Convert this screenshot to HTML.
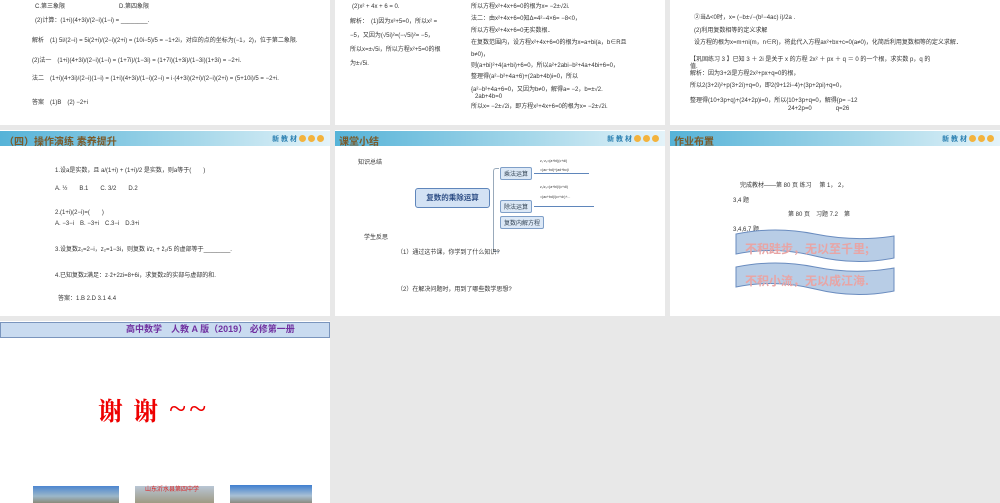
<!DOCTYPE html>
<html><head><meta charset="utf-8"><style>
*{margin:0;padding:0;box-sizing:border-box}
body{width:1000px;height:503px;background:#e8e8e8;position:relative;overflow:hidden;font-family:"Liberation Sans","Noto Sans CJK SC",sans-serif;color:#333}
.p{position:absolute;background:#fff;overflow:hidden}
.t{position:absolute;font-size:6px;white-space:nowrap;line-height:1}
.hd{position:absolute;left:0;top:1px;width:100%;height:15px;background:linear-gradient(90deg,#56b3d8 0%,#a7d8ea 60%,#e4f3f9 100%)}
.hd b{position:absolute;left:4px;top:2px;font-size:10px;color:#7a5a2a;font-weight:bold}
.nj{position:absolute;right:6px;top:3px;font-size:7px;color:#2a7fb0;font-weight:bold}
.dot{display:inline-block;width:7px;height:7px;border-radius:50%;background:#f3b33d;margin-left:2px;vertical-align:-1px}
.bx{position:absolute;border:1px solid #7f9fc8;background:#dce8f6;font-size:6px;color:#345;padding:1px 3px;border-radius:2px}
</style></head><body>
<!-- row1 -->
<div class="p" style="left:0;top:0;width:330px;height:125px">
<div class="t" style="left:35px;top:4px">C.第三象限　　　　　　　　　D.第四象限</div>
<div class="t" style="left:35px;top:18px">(2)计算：(1+i)(4+3i)/(2−i)(1−i) = ________.</div>
<div class="t" style="left:32px;top:38px">解析　(1) 5i/(2−i) = 5i(2+i)/(2−i)(2+i) = (10i−5)/5 = −1+2i，对应的点的坐标为(−1，2)，位于第二象限.</div>
<div class="t" style="left:32px;top:58px">(2)法一　(1+i)(4+3i)/(2−i)(1−i) = (1+7i)/(1−3i) = (1+7i)(1+3i)/(1−3i)(1+3i) = −2+i.</div>
<div class="t" style="left:32px;top:76px">法二　(1+i)(4+3i)/(2−i)(1−i) = (1+i)(4+3i)/(1−i)(2−i) = i·(4+3i)(2+i)/(2−i)(2+i) = (5+10i)/5 = −2+i.</div>
<div class="t" style="left:32px;top:100px">答案　(1)B　(2) −2+i</div>
</div>
<div class="p" style="left:335px;top:0;width:330px;height:125px">
<div class="t" style="left:17px;top:4px">(2)x² + 4x + 6 = 0.</div>
<div class="t" style="left:15px;top:19px">解析：　(1)因为x²+5=0，所以x² =</div>
<div class="t" style="left:15px;top:33px">−5，又因为(√5i)²=(−√5i)²= −5，</div>
<div class="t" style="left:15px;top:47px">所以x=±√5i，所以方程x²+5=0的根</div>
<div class="t" style="left:15px;top:61px">为±√5i.</div>
<div class="t" style="left:136px;top:4px">所以方程x²+4x+6=0的根为x= −2±√2i.</div>
<div class="t" style="left:136px;top:16px">法二：由x²+4x+6=0知Δ=4²−4×6= −8&lt;0，</div>
<div class="t" style="left:136px;top:28px">所以方程x²+4x+6=0无实数根．</div>
<div class="t" style="left:136px;top:40px">在复数范围内，设方程x²+4x+6=0的根为x=a+bi(a，b∈R且</div>
<div class="t" style="left:136px;top:52px">b≠0)，</div>
<div class="t" style="left:136px;top:63px">则(a+bi)²+4(a+bi)+6=0，所以a²+2abi−b²+4a+4bi+6=0，</div>
<div class="t" style="left:136px;top:74px">整理得(a²−b²+4a+6)+(2ab+4b)i=0，所以</div>
<div class="t" style="left:136px;top:87px">{a²−b²+4a+6=0，又因为b≠0，解得a= −2，b=±√2.</div>
<div class="t" style="left:140px;top:94px">2ab+4b=0</div>
<div class="t" style="left:136px;top:104px">所以x= −2±√2i，即方程x²+4x+6=0的根为x= −2±√2i.</div>
</div>
<div class="p" style="left:670px;top:0;width:330px;height:125px">
<div class="t" style="left:24px;top:15px">②当Δ&lt;0时，x= (−b±√−(b²−4ac) i)/2a .</div>
<div class="t" style="left:24px;top:28px">(2)利用复数相等的定义求解</div>
<div class="t" style="left:24px;top:40px">设方程的根为x=m+ni(m，n∈R)，将此代入方程ax²+bx+c=0(a≠0)，化简后利用复数相等的定义求解．</div>
<div class="t" style="left:20px;top:57px">【巩固练习 3 】已知 3 ＋ 2i 是关于 x 的方程 2x² ＋ px ＋ q ＝ 0 的一个根，求实数 p，q 的</div>
<div class="t" style="left:20px;top:64px">值.</div>
<div class="t" style="left:20px;top:71px">解析：因为3+2i是方程2x²+px+q=0的根，</div>
<div class="t" style="left:20px;top:83px">所以2(3+2i)²+p(3+2i)+q=0，即2(9+12i−4)+(3p+2pi)+q=0，</div>
<div class="t" style="left:20px;top:98px">整理得(10+3p+q)+(24+2p)i=0，所以{10+3p+q=0，解得{p= −12</div>
<div class="t" style="left:118px;top:106px">24+2p=0　　　　q=26</div>
</div>
<!-- row2 -->
<div class="p" style="left:0;top:130px;width:330px;height:186px">
<div class="hd"><b>（四）操作演练  素养提升</b><span class="nj">新 教 材<span class="dot"></span><span class="dot"></span><span class="dot"></span></span></div>
<div class="t" style="left:55px;top:38px">1.设a是实数，且 a/(1+i) + (1+i)/2 是实数，则a等于(　　)</div>
<div class="t" style="left:55px;top:56px">A. ½　　B.1　　C. 3/2　　D.2</div>
<div class="t" style="left:55px;top:80px">2.(1+i)(2−i)=(　　)</div>
<div class="t" style="left:55px;top:91px">A. −3−i　B. −3+i　C.3−i　D.3+i</div>
<div class="t" style="left:55px;top:117px">3.设复数z₁=2−i，z₂=1−3i，则复数 i/z₁ + z̄₂/5 的虚部等于________.</div>
<div class="t" style="left:55px;top:143px">4.已知复数z满足：z·z̄+2zi=8+6i，求复数z的实部与虚部的和.</div>
<div class="t" style="left:58px;top:166px">答案：1.B  2.D  3.1  4.4</div>
</div>
<div class="p" style="left:335px;top:130px;width:330px;height:186px">
<div class="hd"><b>课堂小结</b><span class="nj">新 教 材<span class="dot"></span><span class="dot"></span><span class="dot"></span></span></div>
<div class="t" style="left:23px;top:30px">知识总结</div>
<div style="position:absolute;left:80px;top:58px;width:75px;height:20px;border:1px solid #5f86bb;background:#d3e2f4;border-radius:3px;font-size:7.5px;color:#2f4f86;text-align:center;line-height:18px;font-weight:bold">复数的乘除运算</div>
<div style="position:absolute;left:158px;top:38px;width:6px;height:84px;border:1px solid #9ab;border-right:none;border-radius:3px 0 0 3px"></div>
<div class="bx" style="left:165px;top:37px">乘法运算</div>
<div class="bx" style="left:165px;top:70px">除法运算</div>
<div class="bx" style="left:165px;top:86px">复数内解方程</div>
<div style="position:absolute;left:199px;top:43px;width:55px;border-top:1px solid #5f86bb"></div>
<div style="position:absolute;left:199px;top:76px;width:60px;border-top:1px solid #5f86bb"></div>
<div class="t" style="left:205px;top:30px;font-size:3.5px">z₁·z₂=(a+bi)(c+di)</div>
<div class="t" style="left:205px;top:39px;font-size:3.5px">=(ac−bd)+(ad+bc)i</div>
<div class="t" style="left:205px;top:56px;font-size:3.5px">z₁/z₂=(a+bi)/(c+di)</div>
<div class="t" style="left:205px;top:66px;font-size:3.5px">=(ac+bd)/(c²+d²)+...</div>
<div class="t" style="left:29px;top:105px">学生反思</div>
<div class="t" style="left:62px;top:120px">（1）通过这节课，你学到了什么知识?</div>
<div class="t" style="left:62px;top:157px">（2）在解决问题时，用到了哪些数学思想?</div>
</div>
<div class="p" style="left:670px;top:130px;width:330px;height:186px">
<div class="hd"><b>作业布置</b><span class="nj">新 教 材<span class="dot"></span><span class="dot"></span><span class="dot"></span></span></div>
<div class="t" style="left:70px;top:53px">完成教材——第 80 页  练习　 第 1， 2，</div>
<div class="t" style="left:63px;top:68px">3,4 题</div>
<div class="t" style="left:118px;top:82px">第 80 页　习题 7.2　第</div>
<div class="t" style="left:63px;top:97px">3,4,6,7 题</div>
<svg style="position:absolute;left:65px;top:98px" width="160" height="97">
<path d="M1 6 Q40 -2 80 6 T159 8 V30 Q120 38 80 28 T1 26 Z" fill="#b8cde6" stroke="#6a8cbf"/>
<path d="M1 39 Q40 31 80 39 T159 40 V63 Q120 71 80 61 T1 59 Z" fill="#b8cde6" stroke="#6a8cbf"/>
<text x="10" y="25" font-size="12" fill="#e8a5a5" font-weight="bold" font-family="Noto Sans CJK SC">不积跬步，无以至千里;</text>
<text x="10" y="57" font-size="12" fill="#e8a5a5" font-weight="bold" font-family="Noto Sans CJK SC">不积小流，无以成江海.</text>
</svg>
</div>
<!-- row3 -->
<div class="p" style="left:0;top:321px;width:330px;height:182px">
<div style="position:absolute;left:0;top:1px;width:330px;height:16px;background:#c9dbf0;border:1px solid #7a95bd"></div>
<div class="t" style="left:126px;top:4px;font-size:9px;color:#7030a0;font-weight:bold">高中数学　人教 A 版（2019）  必修第一册</div>
<div class="t" style="left:98px;top:71px;font-size:25px;color:#e00;font-weight:bold;letter-spacing:2px;font-family:'Noto Serif CJK SC',serif">谢 谢 <span style="font-size:30px">~~</span></div>
<div style="position:absolute;left:33px;top:165px;width:86px;height:17px;background:linear-gradient(#4d86d0,#9bb7c9 60%,#8a8a7a)"></div>
<div style="position:absolute;left:135px;top:165px;width:79px;height:17px;background:linear-gradient(#b9c6d5,#9f9a84)"></div>
<div class="t" style="left:145px;top:166px;font-size:6px;color:#d22">山东沂水县第四中学</div>
<div style="position:absolute;left:230px;top:164px;width:82px;height:18px;background:linear-gradient(#3f7fd0,#a8c0d4 60%,#8b8b80)"></div>
</div>
</body></html>
